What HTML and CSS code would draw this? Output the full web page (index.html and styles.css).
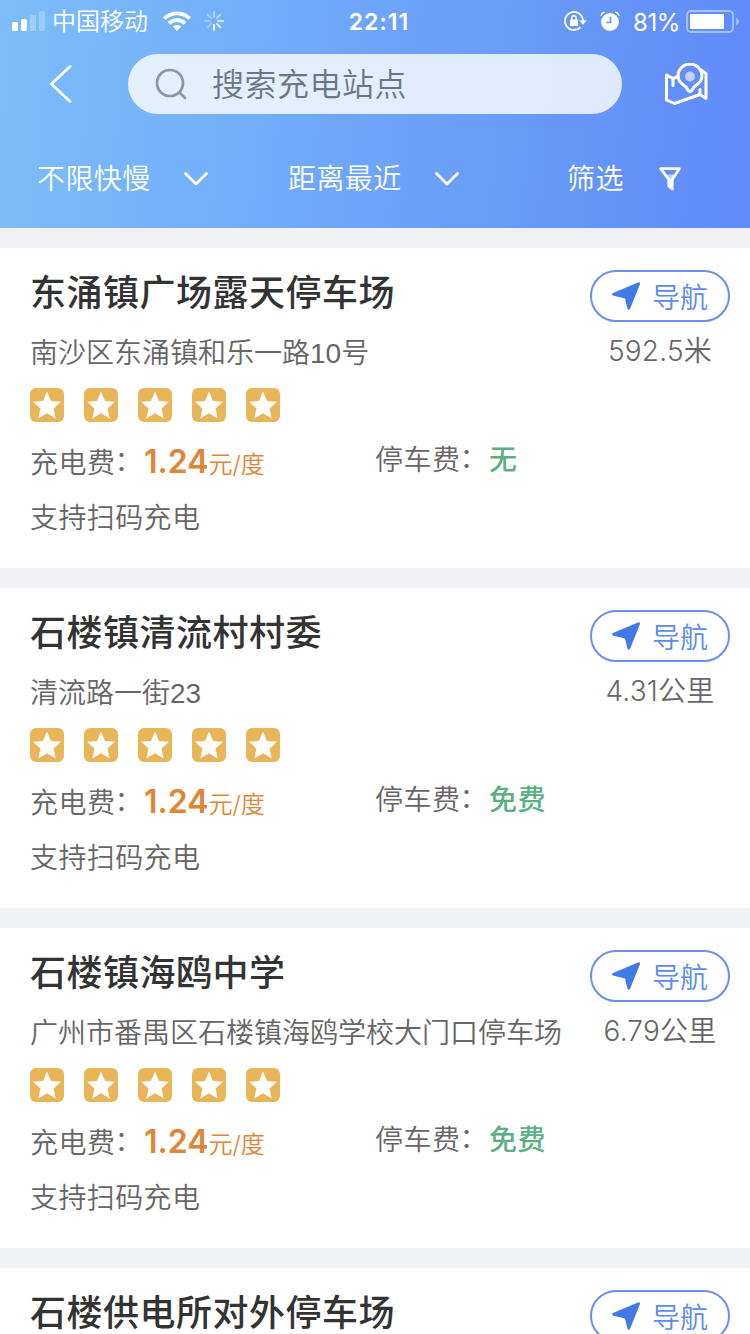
FILE: index.html
```html
<!DOCTYPE html>
<html lang="zh-CN">
<head>
<meta charset="utf-8">
<title>充电站点</title>
<link rel="stylesheet" href="styles.css">
</head>
<body>
<svg class="defs" width="0" height="0">
  <symbol id="star" viewBox="0 0 34 34">
    <rect width="34" height="34" rx="6" fill="#e8b558"/>
    <path d="M17 3.600L21 12.900 31 13.700 23.500 20.400 25.700 30.500 17 25.300 8.300 30.500 10.500 20.400 3 13.700 13 12.900z" fill="#fff"/>
  </symbol>
  <symbol id="arrow" viewBox="0 0 28 28">
    <path d="M26 .5Q28.400 -.3 27.900 2.200L18.200 26.600Q16.800 29 15.400 26.600L13 16.400 1 13.600Q-1 12.400 1 10.900Z" fill="#4279e4"/>
  </symbol>
  <symbol id="chevron" viewBox="0 0 24 14">
    <path d="M1.500 1.500L12 12 22.500 1.500" fill="none" stroke="#fff" stroke-width="2.700" stroke-linecap="round" stroke-linejoin="round"/>
  </symbol>
</svg>

<header class="header">
  <div class="status">
    <div class="status-left">
      <svg class="signal" width="33" height="20" viewBox="0 0 33 20" fill="#fff">
        <rect y="11" width="6" height="9" rx="1.500"/><rect x="9" y="8" width="6" height="12" rx="1.500"/>
        <rect x="18" y="4" width="6" height="16" rx="1.500" opacity=".25"/><rect x="27" width="6" height="20" rx="1.500" opacity=".25"/>
      </svg>
      <span class="carrier">中国移动</span>
      <svg class="wifi" width="28" height="20" viewBox="0 0 28 20" fill="none" stroke="#fff" stroke-width="4">
        <path d="M1.400 7.600a18 18 0 0 1 25.200 0" stroke-width="3.800"/><path d="M6 12.400a11.500 11.500 0 0 1 16 0" stroke-width="3.600"/>
        <path d="M14 20l-4.300-4.400a6.300 6.300 0 0 1 8.600 0z" fill="#fff" stroke="none"/>
      </svg>
      <svg class="spinner" width="20" height="20" viewBox="0 0 20 20" stroke="#fff" stroke-width="1.900" stroke-linecap="round">
        <path d="M10 1v5" opacity=".45"/><path d="M16.400 3.600l-3.500 3.500" opacity=".5"/><path d="M19 10h-5" opacity=".7"/><path d="M16.400 16.400l-3.500-3.500" opacity=".85"/>
        <path d="M10 19v-5"/><path d="M3.600 16.400l3.500-3.500" opacity=".3"/><path d="M1 10h5" opacity=".3"/><path d="M3.600 3.600l3.500 3.500" opacity=".4"/>
      </svg>
    </div>
    <span class="time">22:11</span>
    <div class="status-right">
      <svg class="lock" width="23" height="20" viewBox="0 0 23 20">
        <path d="M16.500 16.200a9 9 0 1 1 2.500-6.600" fill="none" stroke="#fff" stroke-width="1.800"/>
        <path d="M15.200 9.300h7.600L19 13.800z" fill="#fff"/>
        <rect x="6" y="8.500" width="8" height="6.500" rx=".8" fill="#fff"/>
        <path d="M7.800 9V7a2.200 2.200 0 0 1 4.400 0v2" fill="none" stroke="#fff" stroke-width="1.500"/>
      </svg>
      <svg class="alarm" width="20" height="20" viewBox="0 0 20 20">
        <circle cx="10" cy="11" r="8.900" fill="#fff"/>
        <path d="M.8 4.800Q.8 1.200 4.600 1zM19.200 4.800Q19.200 1.200 15.400 1z" fill="#fff" stroke="#fff" stroke-width=".8"/>
        <path d="M10.500 5.800v5.700H6.200" fill="none" stroke="#6b98f8" stroke-width="1.700"/>
      </svg>
      <span class="percent">81%</span>
      <svg class="battery" width="54" height="23" viewBox="0 0 54 23">
        <rect x="1" y="1" width="46" height="21" rx="4" fill="none" stroke="#fff" stroke-opacity=".45" stroke-width="1.800"/>
        <rect x="4" y="4" width="34" height="15" rx="1" fill="#fff"/>
        <path d="M50 8q3 1 3 3.500t-3 3.500z" fill="#fff" opacity=".45"/>
      </svg>
    </div>
  </div>

  <div class="searchbar">
    <svg class="back" width="24" height="40" viewBox="0 0 24 40"><path d="M21 2.500L2.500 20 21 37.500" fill="none" stroke="#fff" stroke-width="2.800" stroke-linecap="round" stroke-linejoin="round"/></svg>
    <div class="search">
      <svg width="32" height="32" viewBox="0 0 32 32" fill="none" stroke="#8796a8" stroke-width="2.700" stroke-linecap="round"><circle cx="15" cy="15" r="13"/><path d="M24.500 24.500l5.500 5.500"/></svg>
      <span class="placeholder">搜索充电站点</span>
    </div>
    <svg class="map" width="44" height="42" viewBox="0 0 44 42" fill="none" stroke="#fff" stroke-width="3" stroke-linejoin="round" stroke-linecap="round">
      <path d="M14 13.500L9 15.500 2.500 12v25L10.500 40.500 36 31.500 42 35.500V10.500L37 7"/><path d="M9 16v6.500M36 31V26.500"/>
      <path d="M26 28.500q-1.500 0-4-4.500-8-5-8-11a12 12 0 0 1 24 0q0 6-8 11-2.500 4.500-4 4.500z"/>
      <circle cx="26" cy="13.500" r="5" fill="#c3d0fc" stroke="none"/>
    </svg>
  </div>

  <nav class="filters">
    <div class="filter speed"><span>不限快慢</span><svg width="24" height="14"><use href="#chevron"/></svg></div>
    <div class="filter distance-sort"><span>距离最近</span><svg width="24" height="14"><use href="#chevron"/></svg></div>
    <div class="filter"><span>筛选</span>
      <svg class="funnel" width="22" height="24" viewBox="0 0 22 24"><path d="M1.700 1.700h18.600L13.200 12.500v9.500L9.800 19v-6.500z" fill="none" stroke="#fff" stroke-width="2.800" stroke-linejoin="round"/><path d="M7 8l9-1-3 5.500v8L9.500 19v-6.500z" fill="#fff" opacity=".6"/><path d="M9.500 12h4v9l-4-2z" fill="#fff"/></svg>
    </div>
  </nav>
</header>

<main class="stations">
  <article class="card">
    <div class="info">
      <h2 class="name">东涌镇广场露天停车场</h2>
      <p class="address">南沙区东涌镇和乐一路10号</p>
      <div class="stars"><svg><use href="#star"/></svg><svg><use href="#star"/></svg><svg><use href="#star"/></svg><svg><use href="#star"/></svg><svg><use href="#star"/></svg></div>
      <div class="fees"><p class="charge">充电费<i>：</i><b>1.24</b><small>元/度</small></p><p class="parking">停车费<i>：</i><b>无</b></p></div>
      <p class="support">支持扫码充电</p>
    </div>
    <div class="side">
      <button class="navigate"><svg width="28" height="28"><use href="#arrow"/></svg><span>导航</span></button>
      <p class="distance">592.5米</p>
    </div>
  </article>

  <article class="card">
    <div class="info">
      <h2 class="name">石楼镇清流村村委</h2>
      <p class="address">清流路一街23</p>
      <div class="stars"><svg><use href="#star"/></svg><svg><use href="#star"/></svg><svg><use href="#star"/></svg><svg><use href="#star"/></svg><svg><use href="#star"/></svg></div>
      <div class="fees"><p class="charge">充电费<i>：</i><b>1.24</b><small>元/度</small></p><p class="parking">停车费<i>：</i><b>免费</b></p></div>
      <p class="support">支持扫码充电</p>
    </div>
    <div class="side">
      <button class="navigate"><svg width="28" height="28"><use href="#arrow"/></svg><span>导航</span></button>
      <p class="distance">4.31公里</p>
    </div>
  </article>

  <article class="card">
    <div class="info">
      <h2 class="name">石楼镇海鸥中学</h2>
      <p class="address">广州市番禺区石楼镇海鸥学校大门口停车场</p>
      <div class="stars"><svg><use href="#star"/></svg><svg><use href="#star"/></svg><svg><use href="#star"/></svg><svg><use href="#star"/></svg><svg><use href="#star"/></svg></div>
      <div class="fees"><p class="charge">充电费<i>：</i><b>1.24</b><small>元/度</small></p><p class="parking">停车费<i>：</i><b>免费</b></p></div>
      <p class="support">支持扫码充电</p>
    </div>
    <div class="side">
      <button class="navigate"><svg width="28" height="28"><use href="#arrow"/></svg><span>导航</span></button>
      <p class="distance">6.79公里</p>
    </div>
  </article>

  <article class="card last">
    <div class="info">
      <h2 class="name">石楼供电所对外停车场</h2>
    </div>
    <div class="side">
      <button class="navigate"><svg width="28" height="28"><use href="#arrow"/></svg><span>导航</span></button>
    </div>
  </article>
</main>
</body>
</html>
```

FILE: styles.css
```css
* { box-sizing: border-box; margin: 0; padding: 0; }

html { overflow: hidden; }

body {
  width: 750px;
  height: 1334px;
  overflow: hidden;
  display: flex;
  flex-direction: column;
  background: #eff1f5;
  color: #666;
  font-family: Inter, "Noto Sans CJK SC", sans-serif;
  font-size: 28px;
  font-weight: 350;
  white-space: nowrap;
}

svg { display: block; flex: none; }
.defs { position: absolute; }

.header {
  flex: none;
  height: 228px;
  color: #fff;
  background: linear-gradient(95deg, #7cbefa 0%, #6fa5f9 48%, #5f8af8 100%);
}

.status {
  height: 40px;
  display: grid;
  grid-template-columns: 1fr auto 1fr;
  align-items: center;
  padding: 0 10px 0 12px;
}
.status-left, .status-right { display: flex; align-items: center; }
.status-right { justify-content: flex-end; }
.carrier { margin-left: 7px; font-size: 24px; line-height: 40px; padding-top: 2px; }
.wifi { margin-left: 15px; }
.spinner { margin-left: 13px; }
.time { font-size: 23px; font-weight: 600; letter-spacing: 1px; line-height: 40px; padding: 2px 0 0 6px; }
.lock { margin-right: 13px; }
.alarm { margin-right: 13px; }
.percent { font-size: 24px; font-weight: 400; letter-spacing: -.4px; margin-right: 6px; padding-top: 2px; }

.searchbar {
  display: flex;
  align-items: center;
  height: 60px;
  margin-top: 14px;
  padding-left: 49px;
}
.search {
  width: 494px;
  height: 60px;
  margin-left: 55px;
  padding-left: 27px;
  display: flex;
  align-items: center;
  border-radius: 30px;
  background: rgba(255, 255, 255, .8);
}
.placeholder {
  margin: 1px 0 0 25px;
  color: #6b7684;
  font-size: 32px;
  line-height: 40px;
  letter-spacing: .5px;
}
.map { margin-left: 42px; }

.filters {
  display: flex;
  align-items: center;
  height: 50px;
  margin-top: 40px;
  padding-left: 37px;
}
.filter {
  display: flex;
  align-items: center;
  gap: 33px;
  letter-spacing: .4px;
}
.filter span { line-height: 40px; }
.speed { width: 251px; }
.distance-sort { width: 279px; }
.funnel { margin-left: 2px; }

.stations { display: flex; flex-direction: column; gap: 20px; padding-top: 20px; }

.card {
  display: flex;
  justify-content: space-between;
  flex: none;
  height: 320px;
  padding: 20px 20px 0 30px;
  background: #fff;
}
.last { height: 66px; }
.name {
  color: #333;
  font-size: 36px;
  font-weight: 500;
  line-height: 50px;
  letter-spacing: .5px;
}
.address {
  margin-top: 16px;
  line-height: 40px;
  font-family: "Liberation Sans", "Noto Sans CJK SC", sans-serif;
}
.stars { display: flex; gap: 20px; margin-top: 14px; }
.stars svg { width: 34px; height: 34px; }
.fees { display: grid; grid-template-columns: 345px auto; margin-top: 20px; height: 40px; letter-spacing: .5px; }
.fees i { font-style: normal; line-height: 1; vertical-align: 2px; margin: 0 1px 0 -1px; }
.charge { line-height: 40px; color: #666; }
.charge b { color: #de8636; font-size: 32px; font-weight: 600; letter-spacing: 0; }
.charge small { color: #de8636; font-size: 24px; letter-spacing: 0; }
.parking { line-height: 37px; }
.parking b { color: #5ab082; font-weight: 500; }
.support { margin-top: 16px; line-height: 40px; letter-spacing: .4px; }

.side { width: 140px; padding-top: 2px; display: flex; flex-direction: column; align-items: center; }
.navigate {
  width: 140px;
  height: 52px;
  flex: none;
  display: flex;
  align-items: center;
  justify-content: center;
  gap: 12px;
  border: 2px solid #6b8feb;
  border-radius: 26px;
  background: #fff;
  color: #5c8beb;
  font: inherit;
}
.distance { margin-top: 9px; line-height: 40px; letter-spacing: .2px; }
```
